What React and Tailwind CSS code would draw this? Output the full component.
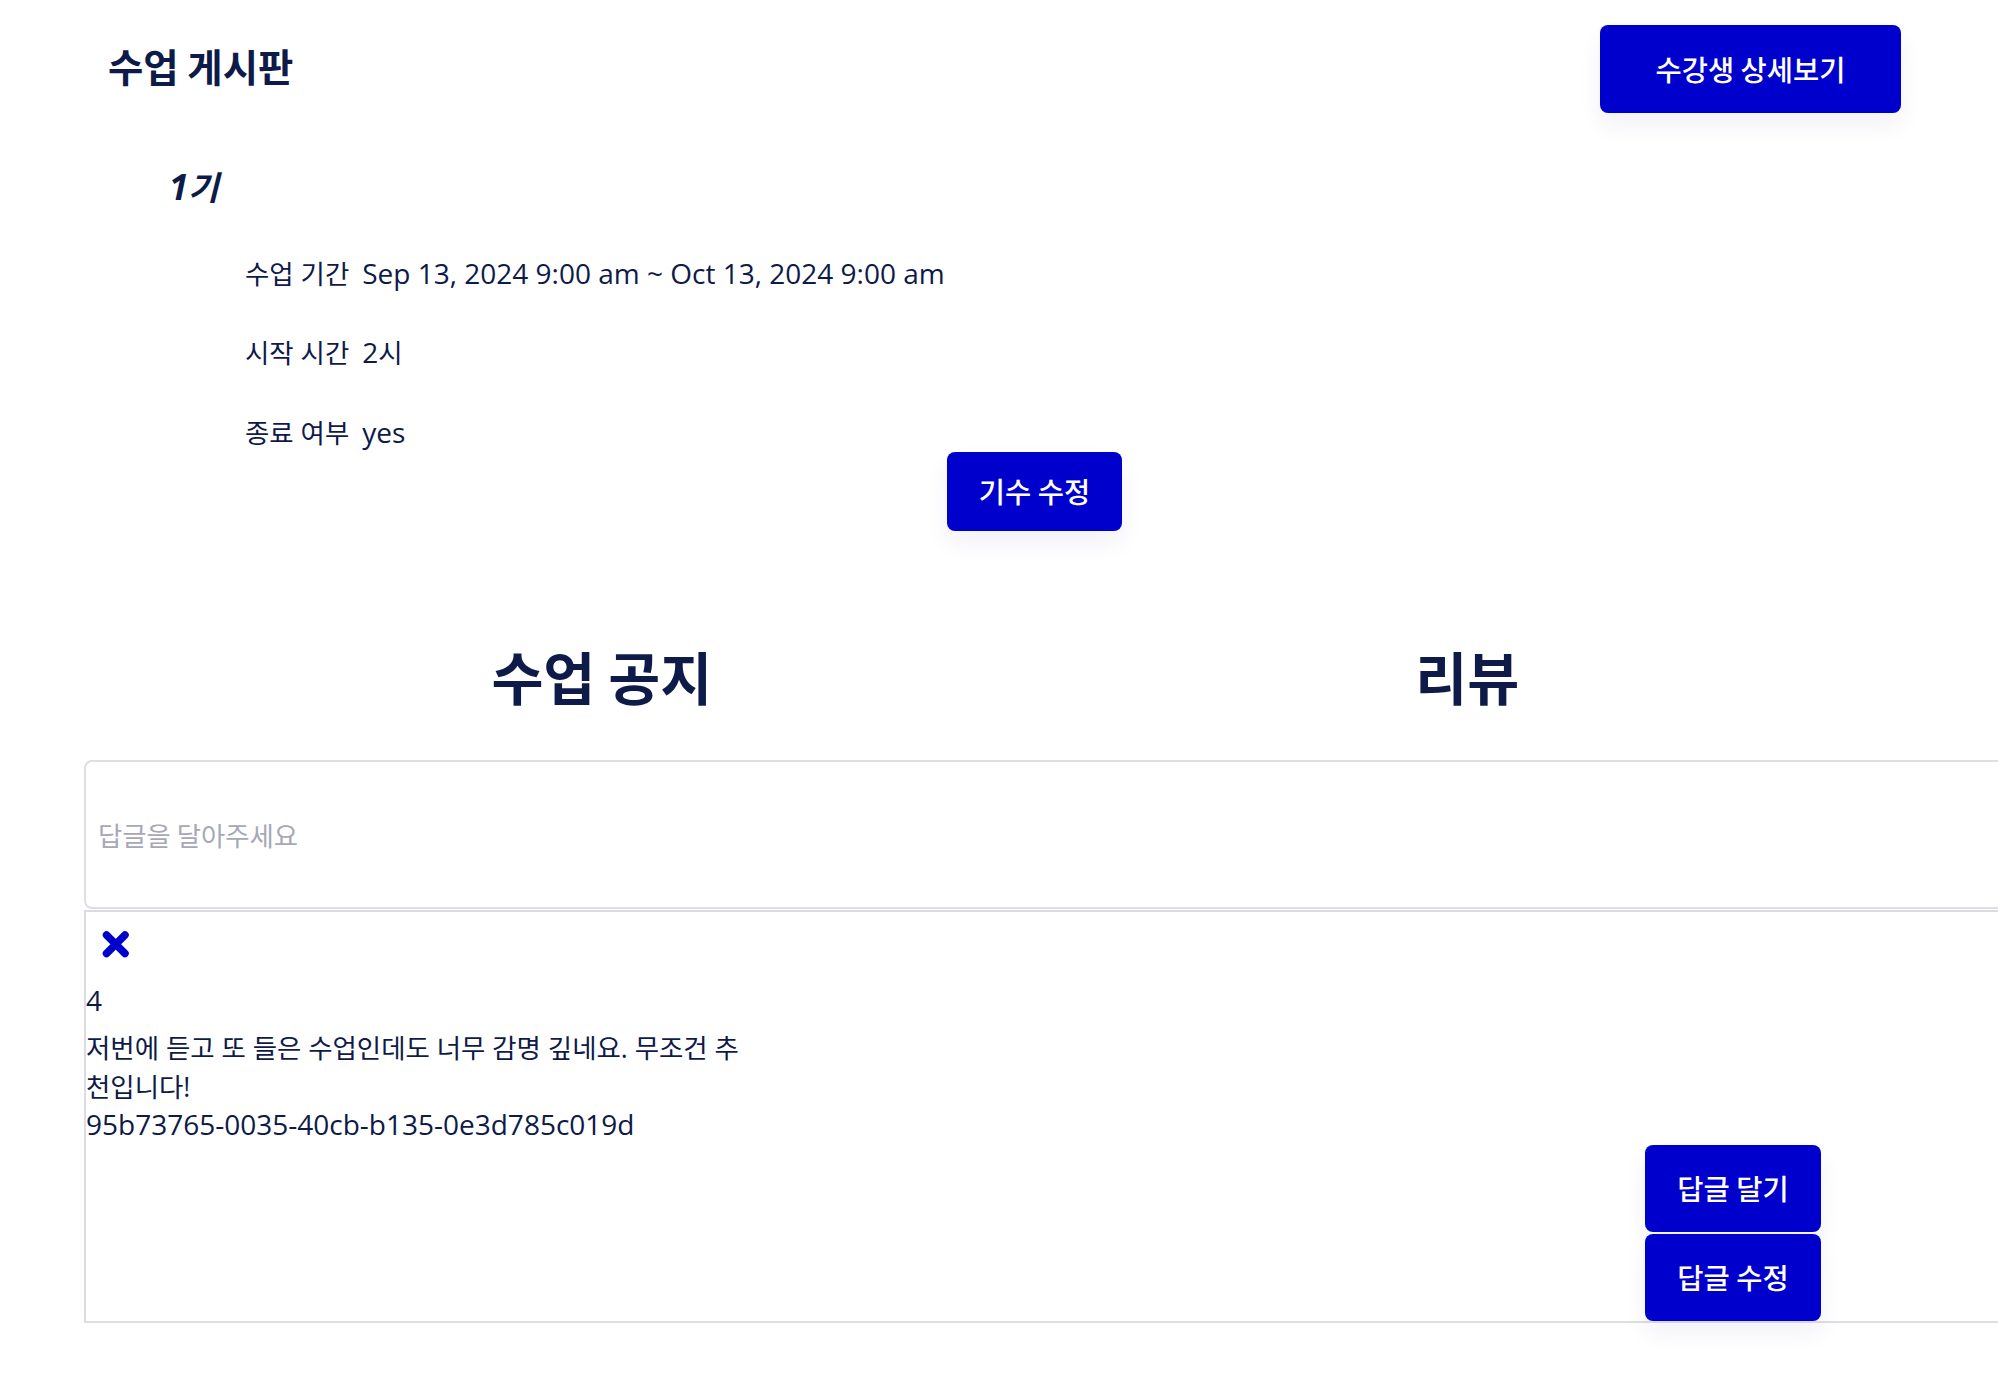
import React from "react";

const K = ({ children }) => <span className="text-[0.945em]">{children}</span>;

const btn =
  "flex items-center justify-center rounded-lg bg-[#0000cd] text-white font-medium text-[28.5px] font-['Noto_Sans_CJK_KR',sans-serif] shadow-[0_12px_24px_rgba(30,30,140,0.06)]";

function XIcon() {
  return (
    <svg width="30" height="29" viewBox="0 0 30 29" aria-hidden="true">
      <path
        d="M5.5 5 L24 23.5 M24 5 L5.5 23.5"
        stroke="#0000cd"
        strokeWidth="7.5"
        strokeLinecap="round"
        fill="none"
      />
    </svg>
  );
}

export default function App() {
  return (
    <div className="w-full min-h-screen overflow-hidden bg-white text-[#0e1a48] font-['Open_Sans','Noto_Sans_CJK_KR',sans-serif]">
      {/* header */}
      <div className="flex items-start justify-between pl-[108px] pr-[97px] pt-[25px]">
        <h1 className="mt-[13px] text-[38.4px] leading-[54px] font-bold font-['Noto_Sans_CJK_KR',sans-serif]">
          수업 게시판
        </h1>
        <button className={btn + " h-[88px] w-[301px]"}>수강생 상세보기</button>
      </div>

      {/* cohort section */}
      <div className="flex flex-col pl-[169px] pr-[98px]">
        <div className="mt-[48px] h-[52.5px] text-[35px] leading-[1.5] font-bold italic">
          1<K>기</K>
        </div>
        <div className="mt-[39px] flex flex-col gap-[38.25px] text-[28px] leading-[41.25px] pl-[76px]">
          <div className="flex h-[41.25px] items-baseline gap-[13px]">
            <K>수업 기간</K>
            <span>Sep 13, 2024 9:00 am ~ Oct 13, 2024 9:00 am</span>
          </div>
          <div className="flex h-[41.25px] items-baseline gap-[13px]">
            <K>시작 시간</K>
            <span>
              2<K>시</K>
            </span>
          </div>
          <div className="flex h-[41.25px] items-baseline gap-[13px]">
            <K>종료 여부</K>
            <span>yes</span>
          </div>
        </div>
        <button className={btn + " self-center -mt-[1px] h-[79px] w-[175px]"}>기수 수정</button>

        <div className="mt-[102px] flex h-[84.75px] font-['Noto_Sans_CJK_KR',sans-serif] text-[56.5px] leading-[1.5] font-bold">
          <div className="flex-1 text-center">수업 공지</div>
          <div className="flex-1 text-center">리뷰</div>
        </div>
      </div>

      {/* reply input */}
      <div className="ml-[84px] mt-[42px] w-[2000px]">
        <input
          className="block h-[149px] w-full rounded-lg border-2 border-[#dedee3] bg-white px-[12px] text-[26.4px] font-['Noto_Sans_CJK_KR',sans-serif] outline-none placeholder:text-[#a6a8b7]"
          placeholder="답글을 달아주세요"
        />
      </div>

      {/* review item */}
      <div className="ml-[84px] mt-[1px] w-[2000px] border-2 border-[#dcdbe4] border-b-[#dedee2]">
        <div className="h-[68.5px] pl-[15px] pt-[18px]">
          <XIcon />
        </div>
        <div className="text-[28px]">
          <div className="h-[41px] leading-[41px]">4</div>
          <div className="mt-[7.3px] leading-[38px]">
            <K>
              저번에 듣고 또 들은 수업인데도 너무 감명 깊네요. 무조건 추
              <br />
              천입니다!
            </K>
          </div>
          <div className="-mt-[2px] h-[41px] leading-[41px]">95b73765-0035-40cb-b135-0e3d785c019d</div>
        </div>
        <div className="ml-[1559px] flex flex-col gap-[2px]">
          <button className={btn + " h-[87px] w-[176px]"}>답글 달기</button>
          <button className={btn + " h-[87px] w-[176px]"}>답글 수정</button>
        </div>
      </div>
    </div>
  );
}
